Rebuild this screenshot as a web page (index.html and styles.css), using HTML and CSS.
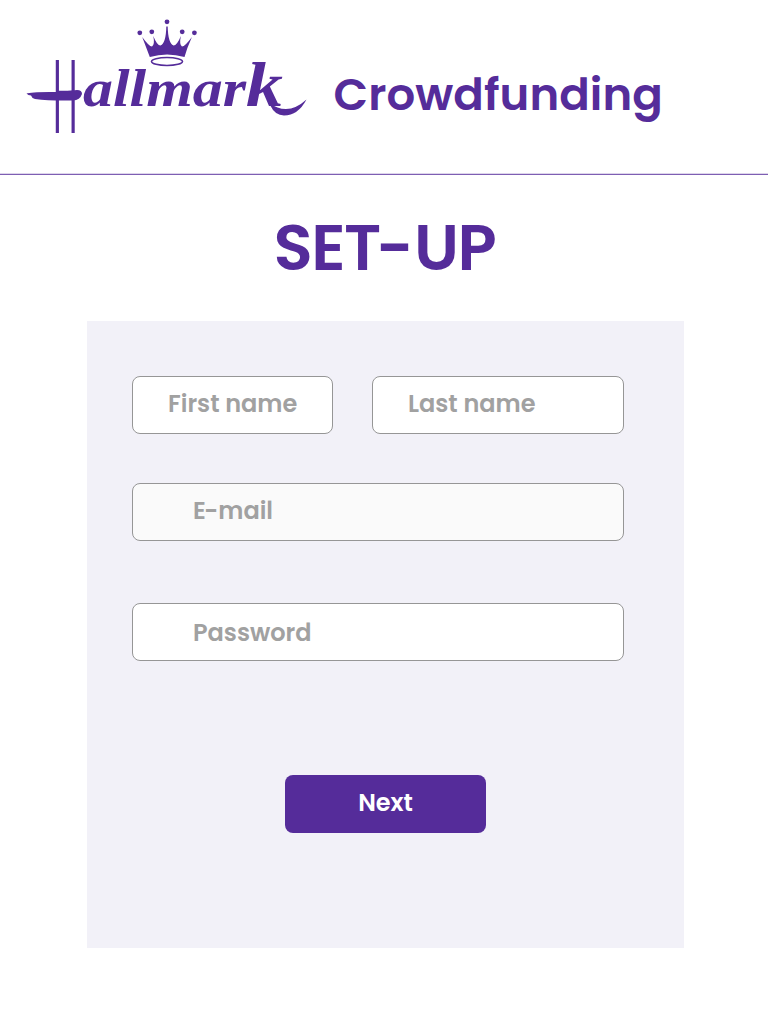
FILE: index.html
```html
<!DOCTYPE html>
<html lang="en">
<head>
<meta charset="utf-8">
<title>Hallmark Crowdfunding</title>
<link rel="stylesheet" href="styles.css">
</head>
<body>
<header class="header">
  <svg class="logo" width="290" height="155" viewBox="20 10 290 155" role="img" aria-label="Hallmark">
    <!-- crown -->
    <circle cx="167" cy="21.8" r="2.4"/><circle cx="151.8" cy="31.8" r="2.4"/><circle cx="182.2" cy="31.8" r="2.4"/><circle cx="139.8" cy="32.8" r="2.4"/><circle cx="194.4" cy="32.8" r="2.4"/>
    <path d="M142.200 37Q149 46.500 152 46.500Q155 44.500 153.300 36Q157 45.500 160.500 45.500Q166 43 166.300 26.500H167.700Q168 43 173.500 45.500Q177 45.500 180.900 36Q179 44.500 182 46.500Q185 46.500 191.900 37Q187 48 184.500 57Q167 52 149.800 57Z"/>
    <ellipse class="ring" cx="167" cy="61.500" rx="15.500" ry="4"/>
    <!-- wordmark with its flourishes -->
    <text class="initial" transform="translate(53 132.500) scale(.32 1)">H</text>
    <text class="script" x="83" y="106" textLength="200" lengthAdjust="spacingAndGlyphs">allmar<tspan class="tall">k</tspan></text>
    <path d="M26.500 93.500Q31 91.600 58 92L77 90Q82 90 82 94Q80 100 73 100.500Q50 101 35 99Q32 98.500 31 95.500Q28 95.500 26.500 93.500Z"/>
    <path d="M270 103Q277 109 286 109Q296 109 306.500 99.500Q298 115.500 284 115.500Q275 115.500 270 105Z"/>
  </svg>
  <span class="brand">Crowdfunding</span>
</header>
<main class="main">
  <h1 class="title">SE<span class="tight">T</span><span class="dash">-</span>UP</h1>
  <form class="panel">
    <div class="row">
      <div class="field first">First name</div>
      <div class="field last">Last name</div>
    </div>
    <div class="field email"><span class="cap">E</span>-mail</div>
    <div class="field password">Password</div>
    <button class="next" type="button">Next</button>
  </form>
</main>
</body>
</html>
```
FILE: styles.css
```css
* { box-sizing: border-box; }
body {
  margin: 0;
  background: #fff;
  color: #552c9a;
  font-family: Poppins, Inter, sans-serif;
  font-weight: 600;
}
.header {
  display: flex;
  align-items: flex-start;
  height: 175px;
  padding: 10px 0 0 20px;
  border-bottom: 1px solid #7e5fb3;
  box-shadow: inset 0 -1px #ddd5eb;
}
.logo { flex: none; fill: #552c9a; }
.ring { fill: none; stroke: #552c9a; stroke-width: 1.6; }
.initial { font: 400 106px "Liberation Sans", sans-serif; }
.script { font: italic 700 52px "Liberation Serif", serif; }
.tall { font-size: 64px; }
.brand {
  margin: 55px 0 0 23.5px;
  font-size: 45px;
  line-height: 60px;
  letter-spacing: .1px;
}
.title {
  margin: 33px 0 0 273.5px;
  font-size: 64.500px;
  font-weight: 600;
  line-height: 80px;
  letter-spacing: -1.5px;
  white-space: nowrap;
}
.tight { letter-spacing: -5px; }
.dash { letter-spacing: 0; }
.panel {
  width: 597px;
  height: 627px;
  margin: 33px 0 0 87px;
  padding: 55px 60px 0 45px;
  background: #f2f1f8;
}
.row { display: flex; justify-content: space-between; }
.field {
  height: 58px;
  padding-left: 60px;
  border: 1px solid #969696;
  border-radius: 8px;
  background: #fff;
  color: #a1a1a1;
  font-size: 24px;
  line-height: 53px;
  white-space: nowrap;
}
.first { width: 201px; padding-left: 35px; }
.last { width: 252px; padding-left: 35px; }
.email { margin-top: 49px; background: #fafafa; }
.cap { letter-spacing: -1.5px; }
.password { margin-top: 62px; line-height: 57px; }
.next {
  display: block;
  width: 201px;
  height: 58px;
  margin: 114px 0 0 153px;
  padding: 0 0 3px;
  border: 0;
  border-radius: 8px;
  background: #552c9a;
  color: #fff;
  font: inherit;
  font-size: 24px;
  line-height: 55px;
}
```
